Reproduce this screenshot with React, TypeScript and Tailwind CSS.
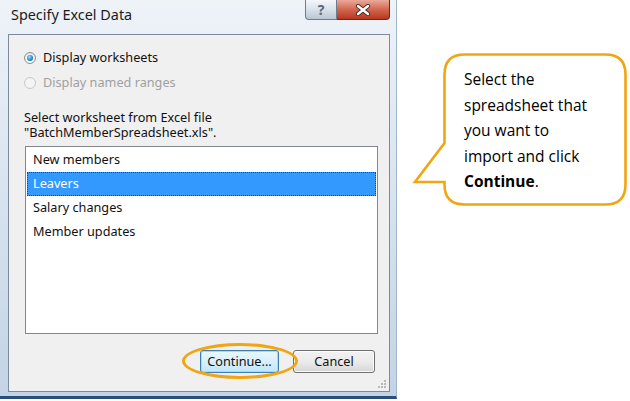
import React from 'react';

const items = ['New members', 'Leavers', 'Salary changes', 'Member updates'];

const Radio = ({ checked, disabled, label }: { checked?: boolean; disabled?: boolean; label: string }) => (
  <div className="flex h-[25px] items-center">
    <span
      className={`flex h-[12px] w-[12px] items-center justify-center rounded-full border ${
        disabled ? 'border-[#c8c8c8] bg-[#f4f4f4]' : 'border-[#8e8f8f] bg-gradient-to-b from-[#e6e6e6] to-[#ffffff]'
      }`}
    >
      {checked && (
        <span className="h-[6px] w-[6px] rounded-full bg-[radial-gradient(circle_at_40%_35%,#9fe2ff,#1a83c9_60%,#0b4f86)]" />
      )}
    </span>
    <span className={`ml-[7px] ${disabled ? 'text-[#a0a0a0]' : 'text-[#111]'}`}>{label}</span>
  </div>
);

export default function App() {
  return (
    <div className="flex h-[401px] w-[630px] bg-white font-['Noto_Sans',sans-serif] text-[12.7px] text-[#111]">
      {/* Dialog window */}
      <div className="flex h-[399px] w-[397px] flex-col border-b-[3px] border-r border-[#2b4f7d] border-r-[#9fb3c9] bg-gradient-to-b from-[#eef3f8] via-[#d7e3ef] to-[#c3d4e6]">
        {/* Title bar */}
        <div className="flex h-[34px] items-start justify-between">
          <span className="pl-[11px] pt-[5px] text-[14.4px] leading-[20px] text-[#1b1b1b]">Specify Excel Data</span>
          <div className="mr-[6px] flex">
            <div className="flex h-[20px] w-[32px] items-center justify-center rounded-bl-[4px] border border-t-0 border-[#6f7c8b] bg-gradient-to-b from-[#f4f7fa] via-[#d9e1ea] to-[#b9c6d4] text-[14px] font-bold leading-none text-[#5d6773]">
              ?
            </div>
            <div className="flex h-[20px] w-[53px] items-center justify-center rounded-br-[4px] border border-l-0 border-t-0 border-[#6b2a1f] bg-gradient-to-b from-[#e9a99a] via-[#d2664f] to-[#b8341c]">
              <svg width="16" height="12" viewBox="0 0 16 12">
                <path d="M3 2 L13 10 M13 2 L3 10" stroke="#4a2a24" strokeWidth="4.2" strokeLinecap="round" />
                <path d="M3 2 L13 10 M13 2 L3 10" stroke="#ffffff" strokeWidth="2.4" strokeLinecap="round" />
              </svg>
            </div>
          </div>
        </div>

        {/* Client area */}
        <div className="relative mb-[4px] ml-[8px] mr-[6px] flex flex-1 flex-col border border-[#7c8a9c] bg-[#f0f0f0] pl-[15px] pt-[10px]">
          <Radio checked label="Display worksheets" />
          <Radio disabled label="Display named ranges" />

          <p className="mt-[15px] leading-[15px]">
            Select worksheet from Excel file
            <br />
            "BatchMemberSpreadsheet.xls".
          </p>

          <div className="ml-[1px] mr-[11px] mt-[6px] h-[188px] border border-[#828790] bg-white pt-[1px]">
            {items.map((item) => (
              <div
                key={item}
                className={`mx-[1px] flex h-[24px] items-center px-[5px] ${
                  item === 'Leavers' ? 'border border-dotted border-[#5a3a10] bg-[#3399ff] text-white' : 'border border-transparent'
                }`}
              >
                {item}
              </div>
            ))}
          </div>

          <div className="mr-[14px] mt-[16px] flex justify-end gap-[14px]">
            <div className="relative">
              <button className="flex h-[23px] w-[79px] items-center justify-center rounded-[3px] border border-[#3c7fb1] bg-gradient-to-b from-[#eaf6fd] via-[#d9f0fc] to-[#bee6fd] text-[12.7px] text-[#111] shadow-[inset_0_0_0_1px_#a7d8f5]">
                Continue...
              </button>
              <div className="absolute left-[-18px] top-[-7px] h-[36px] w-[116px] rounded-[50%] border-[3px] border-[#f0a612]" />
            </div>
            <button className="flex h-[23px] w-[82px] items-center justify-center rounded-[3px] border border-[#707070] bg-gradient-to-b from-[#f2f2f2] via-[#ebebeb] to-[#d6d6d6] text-[12.7px] text-[#111] shadow-[inset_0_0_0_1px_#fbfbfb]">
              Cancel
            </button>
          </div>

          {/* size grip */}
          <svg className="absolute bottom-[2px] right-[2px]" width="10" height="10" viewBox="0 0 10 10">
            {[
              [8, 2],
              [8, 5],
              [5, 5],
              [8, 8],
              [5, 8],
              [2, 8],
            ].map(([x, y]) => (
              <rect key={`${x}-${y}`} x={x - 1} y={y - 1} width="2" height="2" fill="#b9b9b9" />
            ))}
          </svg>
        </div>
      </div>

      {/* Callout */}
      <div className="relative ml-[46px] mt-[53px] h-[153px] w-[184px] pl-[21px] pt-[14px] font-['Open_Sans',sans-serif] text-[15.5px] leading-[25.5px] text-black">
        <svg className="absolute left-0 top-0 overflow-visible" width="184" height="153" viewBox="0 0 184 153">
          <path
            d="M21.5 1.5 H162.5 Q182.5 1.5 182.5 21.5 V131.5 Q182.5 151.5 162.5 151.5 H21.5 Q1.5 151.5 1.5 131.5 V129 H-28 L1.5 90 V21.5 Q1.5 1.5 21.5 1.5 Z"
            fill="white"
            stroke="#f0a612"
            strokeWidth="2.6"
            strokeLinejoin="miter"
          />
        </svg>
        <p className="relative">
          Select the
          <br />
          spreadsheet that
          <br />
          you want to
          <br />
          import and click
          <br />
          <b>Continue</b>.
        </p>
      </div>
    </div>
  );
}
